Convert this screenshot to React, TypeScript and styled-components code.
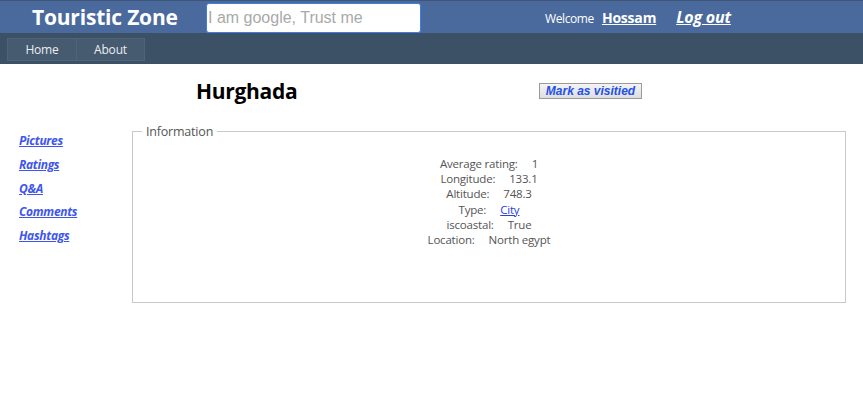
import { createGlobalStyle } from "styled-components";
import styled from "styled-components";

const GlobalStyle = createGlobalStyle`
    body {
        margin: 0;
        background: #ffffff;
        font-family: "Open Sans", "Noto Sans", sans-serif;
    }
`;

const Header = styled.header`
    display: flex;
    align-items: flex-end;
    height: 32px;
    border-top: 1px solid #3f5573;
    background: #4a6a9d;
`;

const Brand = styled.div`
    width: 174px;
    padding-left: 32px;
    align-self: center;
    font-size: 21px;
    font-weight: 700;
    color: #ffffff;
    letter-spacing: -0.2px;
`;

const Search = styled.input`
    box-sizing: border-box;
    width: 215px;
    height: 30px;
    margin: 0;
    padding: 0 0 0 1px;
    border: 1px solid #3b7ee6;
    border-radius: 3px;
    background: #ffffff;
    font-family: "Liberation Sans", Arial, sans-serif;
    font-size: 16px;
    outline: none;

    &::placeholder {
        color: #a9a9a9;
    }
`;

const UserBox = styled.div`
    display: flex;
    align-items: baseline;
    align-self: center;
    margin-left: 124px;
    color: #ffffff;
`;

const Welcome = styled.span`
    font-size: 12px;
    letter-spacing: -0.4px;
`;

const UserLink = styled.a<{ $italic?: boolean }>`
    margin-left: ${(p) => (p.$italic ? "20px" : "8px")};
    color: #ffffff;
    font-weight: 700;
    font-size: ${(p) => (p.$italic ? "16px" : "14px")};
    font-style: ${(p) => (p.$italic ? "italic" : "normal")};
    text-decoration: underline;
    letter-spacing: -0.2px;
`;

const NavBar = styled.nav`
    display: flex;
    height: 31px;
    box-sizing: border-box;
    padding: 5px 0 0 7px;
    background: #3c5066;
`;

const NavItem = styled.a<{ $w: number }>`
    display: flex;
    align-items: center;
    justify-content: center;
    box-sizing: border-box;
    width: ${(p) => p.$w}px;
    height: 23px;
    margin-right: -1px;
    border: 1px solid #4f6379;
    background: #465a70;
    color: #e9eef3;
    font-size: 12px;
    letter-spacing: -0.2px;
`;

const TitleRow = styled.div`
    display: flex;
    align-items: center;
    height: 54px;
    padding-left: 196px;
`;

const Heading = styled.h1`
    width: 343px;
    margin: 0;
    font-size: 21px;
    font-weight: 700;
    color: #000000;
    letter-spacing: -0.3px;
`;

const VisitButton = styled.button`
    box-sizing: border-box;
    width: 103px;
    height: 16px;
    margin-top: 0;
    padding: 0;
    border: 1px solid #9a9a9a;
    background: linear-gradient(#f4f4f4, #dedede);
    color: #2450e6;
    font-family: "Liberation Sans", Arial, sans-serif;
    font-size: 12px;
    font-weight: 700;
    font-style: italic;
    line-height: 14px;
`;

const Body = styled.div`
    display: flex;
    align-items: flex-start;
`;

const Side = styled.ul`
    display: flex;
    flex-direction: column;
    gap: 6.8px;
    width: 132px;
    box-sizing: border-box;
    margin: 0;
    padding: 14px 0 0 19px;
    list-style: none;
`;

const SideLink = styled.a`
    display: block;
    height: 17px;
    color: #3e55ee;
    font-size: 12px;
    font-weight: 700;
    font-style: italic;
    text-decoration: underline;
    letter-spacing: -0.3px;
`;

const InfoBox = styled.fieldset`
    flex: 1;
    box-sizing: border-box;
    height: 180px;
    margin: 5px 17px 0 0;
    padding: 16px 0 0;
    border: 1px solid #c9c9c9;
    text-align: center;
`;

const Legend = styled.legend`
    margin-left: 9px;
    padding: 0 4px;
    color: #555555;
    font-size: 12.5px;
    text-align: left;
    letter-spacing: -0.2px;
`;

const Line = styled.div`
    height: 15.2px;
    color: #555555;
    font-size: 11.5px;
    line-height: 15px;
    letter-spacing: -0.2px;
`;

const Value = styled.span`
    margin-left: 14px;
    color: #555555;
`;

const ValueLink = styled.a`
    margin-left: 14px;
    color: #2440e6;
    text-decoration: underline;
`;

const facts: [string, string][] = [
    ["Average rating:", "1"],
    ["Longitude:", "133.1"],
    ["Altitude:", "748.3"],
    ["Type:", "City"],
    ["iscoastal:", "True"],
    ["Location:", "North egypt"],
];

const sections = ["Pictures", "Ratings", "Q&A", "Comments", "Hashtags"];

export default function App() {
    return (
        <>
            <GlobalStyle />
            <Header>
                <Brand>Touristic Zone</Brand>
                <Search placeholder="I am google, Trust me" />
                <UserBox>
                    <Welcome>Welcome</Welcome>
                    <UserLink>Hossam</UserLink>
                    <UserLink $italic>Log out</UserLink>
                </UserBox>
            </Header>
            <NavBar>
                <NavItem $w={70}>Home</NavItem>
                <NavItem $w={69}>About</NavItem>
            </NavBar>
            <TitleRow>
                <Heading>Hurghada</Heading>
                <VisitButton>Mark as visitied</VisitButton>
            </TitleRow>
            <Body>
                <Side>
                    {sections.map((s) => (
                        <li key={s}>
                            <SideLink>{s}</SideLink>
                        </li>
                    ))}
                </Side>
                <InfoBox>
                    <Legend>Information</Legend>
                    {facts.map(([label, value]) => (
                        <Line key={label}>
                            {label}
                            {label === "Type:" ? <ValueLink>{value}</ValueLink> : <Value>{value}</Value>}
                        </Line>
                    ))}
                </InfoBox>
            </Body>
        </>
    );
}
